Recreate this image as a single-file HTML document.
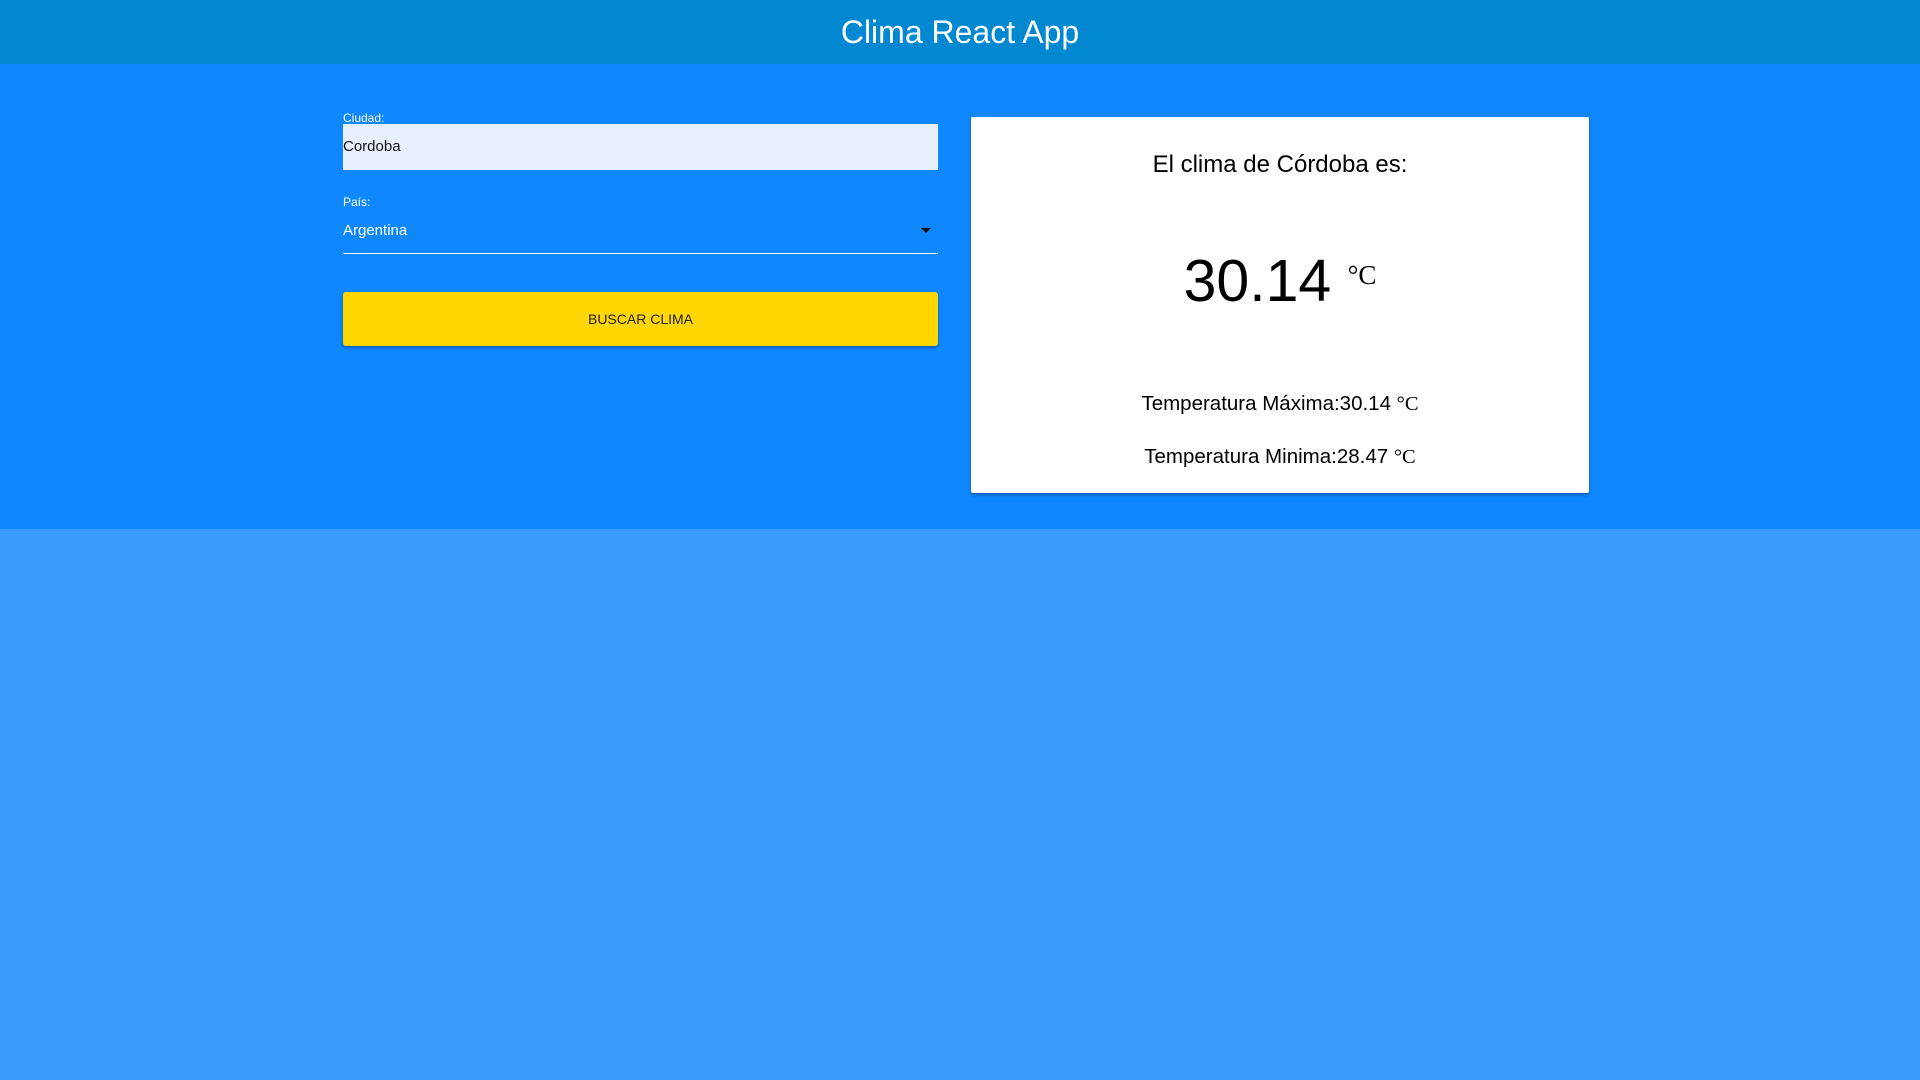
<!DOCTYPE html>
<html><head><meta charset="utf-8"><style>
body{margin:0;width:1920px;height:1080px;background:#3a9bff;font-family:"Liberation Sans",sans-serif;overflow:hidden}
.hdr{height:64px;background:#0288d1;color:#fff;text-align:center;font-size:32px;line-height:64px}
.main{position:absolute;top:64px;left:0;width:1920px;height:465px;background:#0f87ff}
.abs{position:absolute}
.lbl{color:#fff;font-size:12px}
.card{position:absolute;left:971px;top:117px;width:618px;height:376px;background:#fff;border-radius:2px;box-shadow:0 2px 3px rgba(0,0,0,.3);text-align:center;color:#000}
.deg{font-family:"Liberation Serif",serif}
</style></head><body>
<div class="hdr">Clima React App</div>
<div class="main"></div>
<div class="abs lbl" style="left:343px;top:111px">Ciudad:</div>
<div class="abs" style="left:343px;top:124px;width:595px;height:46px;background:#e8f0fe;font-size:15px;line-height:46px;color:#111">Cordoba</div>
<div class="abs lbl" style="left:343px;top:195px">País:</div>
<div class="abs" style="left:343px;top:222px;color:#fff;font-size:15px">Argentina</div>
<div class="abs" style="left:921px;top:228px;width:0;height:0;border-left:5px solid transparent;border-right:5px solid transparent;border-top:5px solid #111"></div>
<div class="abs" style="left:343px;top:253px;width:595px;height:1px;background:#fff"></div>
<div class="abs" style="left:343px;top:292px;width:595px;height:54px;background:#ffd600;border-radius:3px;box-shadow:0 2px 3px rgba(0,0,0,.3);text-align:center;line-height:54px;font-size:14px;color:#222">BUSCAR CLIMA</div>
<div class="card">
<div class="abs" style="left:0;width:618px;top:34px;font-size:24px">El clima de Córdoba es:</div>
<div class="abs" style="left:0;width:618px;top:129px;font-size:59px;line-height:70px">30.14 <span class="deg" style="font-size:27px;vertical-align:top;position:relative;top:-6px">°C</span></div>
<div class="abs" style="left:0;width:618px;top:275px;font-size:20.5px">Temperatura Máxima:30.14 <span class="deg">°C</span></div>
<div class="abs" style="left:0;width:618px;top:328px;font-size:20.5px">Temperatura Minima:28.47 <span class="deg">°C</span></div>
</div>
</body></html>
